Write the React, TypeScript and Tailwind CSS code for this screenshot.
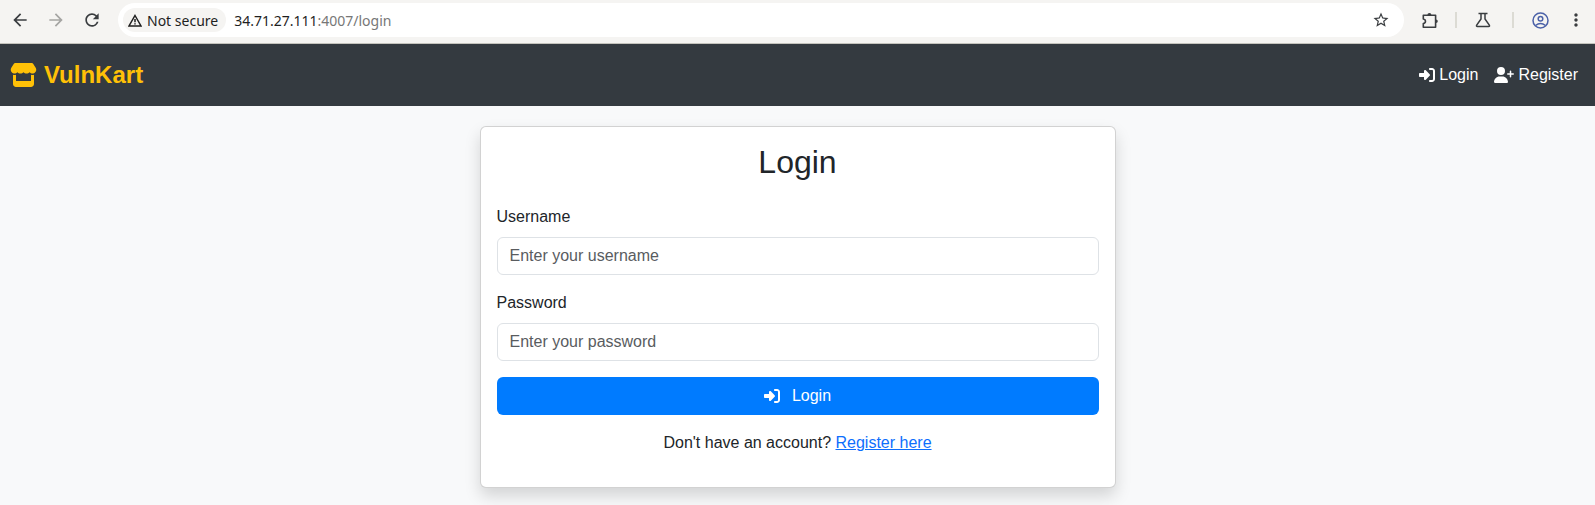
import type { ReactNode } from "react";
import { FaRightToBracket, FaStore, FaUserPlus } from "react-icons/fa6";
import { MdArrowBack, MdArrowForward, MdMoreVert, MdRefresh, MdStarBorder } from "react-icons/md";

function Divider() {
  return <span className="h-4 w-0.5 bg-[#dcdbd4]" />;
}

function BrowserBar() {
  return (
    <header className="flex h-11 shrink-0 items-start border-b border-[#c4c3bd] bg-[#f5f4f2] pt-[3px] text-[#3a3d40]">
      <div className="flex h-[34px] items-center gap-4 pl-[10px]">
        <MdArrowBack className="size-5" />
        <MdArrowForward className="size-5 text-[#a5a5a3]" />
        <MdRefresh className="size-5" />
      </div>
      <div className="ml-4 flex h-[34px] w-[1286px] items-center rounded-full bg-white pl-[5px] pr-[14px] font-['Noto_Sans',sans-serif] text-[14px]">
        <span className="flex h-6 items-center rounded-full bg-[#f5f4f2] pl-[5px] pr-2 text-[#1f1f1f]">
          <svg viewBox="0 0 14 13" className="mr-[5px] h-[13px] w-[14px]" fill="none" stroke="currentColor" strokeWidth="1.5">
            <path d="M7 1.5 13 12H1Z" />
            <path d="M7 5v3.2M7 9.2v1.4" />
          </svg>
          Not secure
        </span>
        <span className="ml-2 text-[#1f1f1f]">
          34.71.27.111<span className="text-[#777]">:4007/login</span>
        </span>
        <MdStarBorder className="ml-auto size-[18px]" />
      </div>
      <div className="flex h-[34px] flex-1 items-center pl-[18px]">
        <svg viewBox="0 0 17 17" className="size-[17px]" fill="none" stroke="currentColor" strokeWidth="1.6">
          <path d="M1.3 3.3H13.6V15.2H1.3V11.6C4.2 11.2 4.2 7.5 1.3 7Z" strokeLinejoin="round" />
          <path d="M5.4 3a2 2 0 0 1 4 0ZM14 7.4a1.8 1.8 0 0 1 0 3.6Z" fill="currentColor" stroke="none" />
        </svg>
        <span className="ml-4 flex"><Divider /></span>
        <svg viewBox="0 0 16 16" className="ml-[18px] size-4" fill="none" stroke="currentColor" strokeWidth="1.5">
          <path d="M3.5 1.5h9M6 1.5v5.4L1.7 13.2q-.7 1.2.7 1.2h11.2q1.4 0 .7-1.2L10 6.900V1.5" />
        </svg>
        <span className="ml-[21px] flex"><Divider /></span>
        <svg viewBox="0 0 17 17" className="ml-[18px] size-[17px] text-[#4b61a8]" fill="none" stroke="currentColor" strokeWidth="1.5">
          <circle cx="8.500" cy="8.500" r="7.500" />
          <circle cx="8.500" cy="6.700" r="2.300" />
          <path d="M3.500 13.500q5-4 10 0" />
        </svg>
        <MdMoreVert className="ml-[17px] size-5" />
      </div>
    </header>
  );
}

function NavLink({ icon, children }: { icon: ReactNode; children: ReactNode }) {
  return (
    <a className="flex items-center gap-1 text-white">
      {icon}
      {children}
    </a>
  );
}

function Navbar() {
  return (
    <nav className="flex h-[62px] shrink-0 items-center justify-between bg-[#343a40] pl-[10px] pr-[17px]">
      <a className="flex items-center gap-[7px] text-2xl font-bold text-[#ffc107]">
        <FaStore className="h-6 w-[27px]" />
        VulnKart
      </a>
      <div className="flex gap-4">
        <NavLink icon={<FaRightToBracket className="size-4" />}>Login</NavLink>
        <NavLink icon={<FaUserPlus className="h-4 w-5" />}>Register</NavLink>
      </div>
    </nav>
  );
}

function Field({ label, type, placeholder }: { label: string; type: string; placeholder: string }) {
  return (
    <div className="mb-4">
      <label className="mb-2 block">{label}</label>
      <input
        type={type}
        placeholder={placeholder}
        className="block h-[38px] w-full rounded-md border border-[#dee2e6] bg-white px-3 placeholder:text-[#595c5f]"
      />
    </div>
  );
}

export default function App() {
  return (
    <div className="flex h-[505px] flex-col overflow-hidden bg-[#f8f9fa] font-['Liberation_Sans',sans-serif] text-base text-[#212529]">
      <BrowserBar />
      <Navbar />
      <main className="flex justify-center pt-5">
        <section className="w-[636px] rounded-md border border-black/17.5 bg-white bg-clip-border p-4 shadow-[0_8px_16px_rgba(0,0,0,0.15)]">
          <h2 className="mb-6 text-center text-[32px] leading-[38.4px] font-normal">Login</h2>
          <Field label="Username" type="text" placeholder="Enter your username" />
          <Field label="Password" type="password" placeholder="Enter your password" />
          <button className="flex h-[38px] w-full items-center justify-center gap-3 rounded-md bg-[#007bff] text-white">
            <FaRightToBracket className="size-4" />
            Login
          </button>
          <p className="my-4 mb-4 text-center">
            Don't have an account? <a className="text-[#0d6efd] underline">Register here</a>
          </p>
        </section>
      </main>
    </div>
  );
}
